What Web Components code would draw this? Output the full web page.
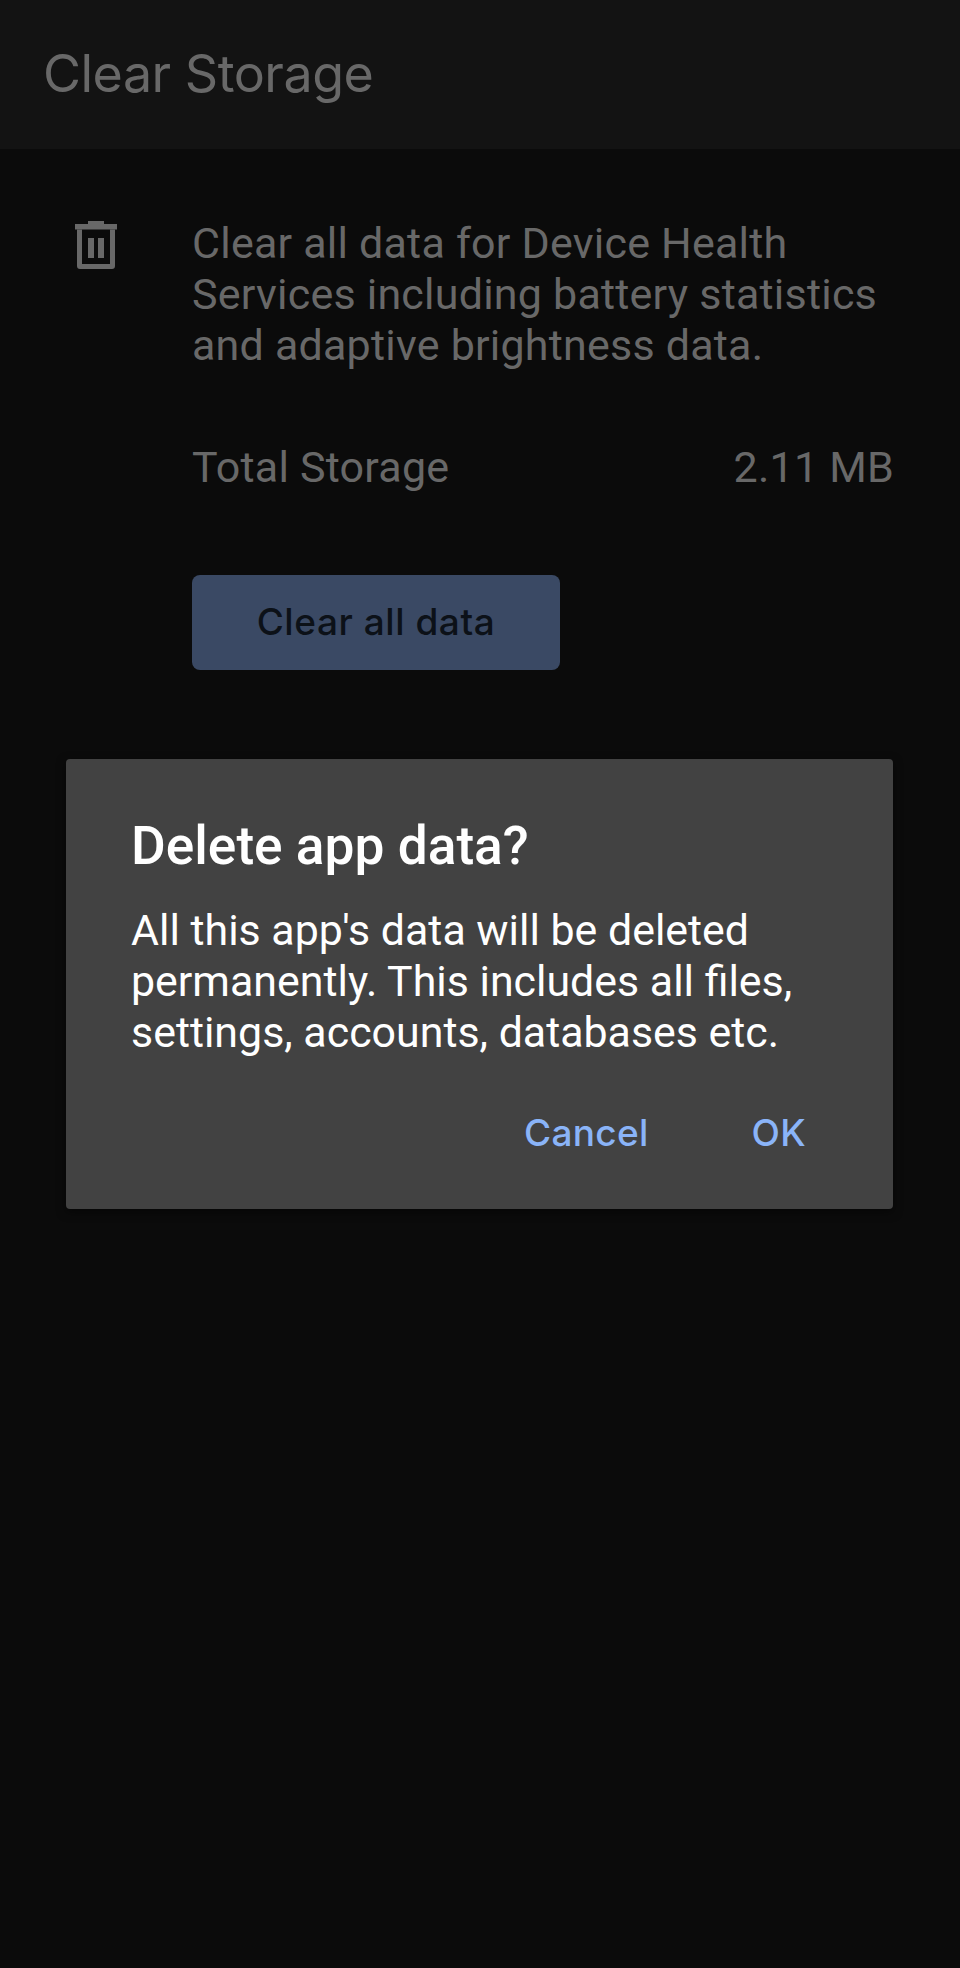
<!DOCTYPE html>
<html lang="en">
<head>
<meta charset="utf-8">
<title>Clear Storage</title>
<style>
  html, body { margin: 0; padding: 0; background: #0b0b0b; }
  body { width: 960px; height: 1968px; overflow: hidden; font-family: Roboto, "Liberation Sans", sans-serif; }
</style>
</head>
<body>
<storage-screen>
  <app-bar slot="bar">Clear Storage</app-bar>
  <storage-panel slot="panel" total="2.11 MB" action="Clear all data">
    Clear all data for Device Health Services including battery statistics and adaptive brightness data.
  </storage-panel>
  <alert-dialog slot="dialog" heading="Delete app data?">
    All this app's data will be deleted permanently. This includes all files, settings, accounts, databases etc.
    <text-button slot="actions">Cancel</text-button>
    <text-button slot="actions">OK</text-button>
  </alert-dialog>
</storage-screen>

<script>
  // small helper, every element below is just a shadow root with a style block
  function shadow(el, html) {
    el.attachShadow({ mode: 'open' }).innerHTML = html;
  }

  class StorageScreen extends HTMLElement {
    connectedCallback() {
      shadow(this, `
        <style>
          :host { display: block; position: relative; width: 960px; height: 1968px; background: #0b0b0b; }
          .over { position: absolute; left: 66px; top: 759px; width: 827px; }
        </style>
        <slot name="bar"></slot>
        <slot name="panel"></slot>
        <div class="over"><slot name="dialog"></slot></div>
      `);
    }
  }

  class AppBar extends HTMLElement {
    connectedCallback() {
      shadow(this, `
        <style>
          :host {
            display: flex; align-items: center; height: 149px; padding: 0 0 2px 43px; box-sizing: border-box;
            background: #131313; color: #686868;
            font: 400 52px/1 Inter, sans-serif; letter-spacing: -.5px;
          }
        </style>
        <slot></slot>
      `);
    }
  }

  class StoragePanel extends HTMLElement {
    connectedCallback() {
      shadow(this, `
        <style>
          :host {
            display: grid; grid-template-columns: 192px 1fr; padding: 69px 66px 0 0;
            color: #686868; font: 400 43px/51px Roboto, sans-serif; letter-spacing: .22px;
          }
          svg { display: block; margin: 3px 0 0 75px; }
          .row { display: flex; justify-content: space-between; margin-top: 71px; }
          .btn {
            display: flex; align-items: center; justify-content: center;
            width: 368px; height: 95px; margin-top: 82px; padding-bottom: 3px; box-sizing: border-box; border-radius: 8px;
            background: #3a4964; color: #0c1118;
            font: 500 37px/1 Inter, sans-serif; letter-spacing: .55px;
          }
        </style>
        <svg width="42" height="49" viewBox="0 0 42 49" fill="#686868">
          <path d="M13 0h16v3h13v5.500H0V3h13z"/>
          <path fill-rule="evenodd" d="M2 8.500h38V45a3 3 0 0 1-3 3H5a3 3 0 0 1-3-3zM7 8.500V43h28V8.500z"/>
          <path d="M13 17h6v20h-6zM23 17h6v20h-6z"/>
        </svg>
        <div>
          <div class="desc"><slot></slot></div>
          <div class="row"><span>Total Storage</span><span>${this.getAttribute('total')}</span></div>
          <div class="btn">${this.getAttribute('action')}</div>
        </div>
      `);
    }
  }

  class AlertDialog extends HTMLElement {
    connectedCallback() {
      shadow(this, `
        <style>
          :host {
            display: block; height: 450px; box-sizing: border-box; padding: 56px 65px 0 65px;
            background: #424242; border-radius: 4px; color: #fff;
            box-shadow: 0 3px 10px rgba(0,0,0,.5);
          }
          h2 { margin: 0; font: 500 53.250px/62px Roboto, sans-serif; }
          p { margin: 28px 0 0; font: 400 42.900px/51px Roboto, sans-serif; }
          .actions { display: flex; justify-content: flex-end; gap: 103px; margin-top: 53px; padding-right: 22px; }
        </style>
        <h2>${this.getAttribute('heading')}</h2>
        <p><slot></slot></p>
        <div class="actions"><slot name="actions"></slot></div>
      `);
    }
  }

  class TextButton extends HTMLElement {
    connectedCallback() {
      shadow(this, `
        <style>
          :host { display: block; color: #8ab4f8; font: 500 37px/44px Inter, sans-serif; letter-spacing: .3px; }
        </style>
        <slot></slot>
      `);
    }
  }

  customElements.define('storage-screen', StorageScreen);
  customElements.define('app-bar', AppBar);
  customElements.define('storage-panel', StoragePanel);
  customElements.define('alert-dialog', AlertDialog);
  customElements.define('text-button', TextButton);
</script>
</body>
</html>
